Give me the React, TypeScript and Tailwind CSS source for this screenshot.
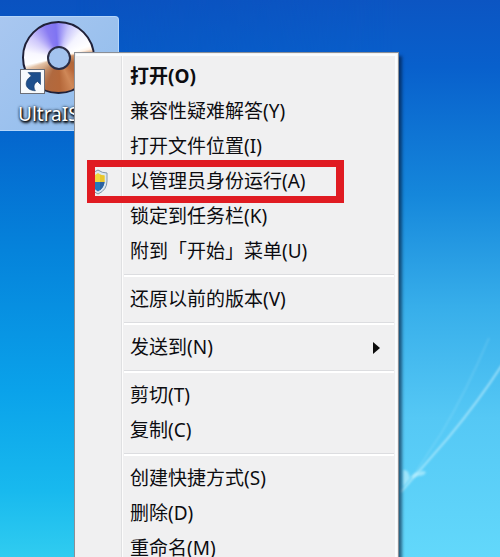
import React from 'react'

type Entry = {
    label: string
    bold?: boolean
    shield?: boolean
    marked?: boolean
    submenu?: boolean
}

const groups: Entry[][] = [
    [
        { label: '打开(O)', bold: true },
        { label: '兼容性疑难解答(Y)' },
        { label: '打开文件位置(I)' },
        { label: '以管理员身份运行(A)', shield: true, marked: true },
        { label: '锁定到任务栏(K)' },
        { label: '附到「开始」菜单(U)' },
    ],
    [{ label: '还原以前的版本(V)' }],
    [{ label: '发送到(N)', submenu: true }],
    [{ label: '剪切(T)' }, { label: '复制(C)' }],
    [{ label: '创建快捷方式(S)' }, { label: '删除(D)' }, { label: '重命名(M)' }],
]

const Wallpaper = () => {
    return (
        <svg
            className="absolute inset-0 w-full h-full"
            viewBox="0 0 500 557"
            preserveAspectRatio="xMidYMin slice"
            aria-hidden="true"
        >
            <defs>
                <linearGradient id="sky" x1="0" y1="0" x2="0" y2="1">
                    <stop offset="0" stopColor="#0a52c0" />
                    <stop offset="0.2" stopColor="#0461cb" />
                    <stop offset="0.45" stopColor="#0583db" />
                    <stop offset="0.7" stopColor="#0aa2ea" />
                    <stop offset="0.88" stopColor="#18b9ee" />
                    <stop offset="1" stopColor="#30ccf0" />
                </linearGradient>
                <linearGradient id="skyRight" x1="0" y1="0" x2="0" y2="1">
                    <stop offset="0" stopColor="#0c55c2" />
                    <stop offset="0.12" stopColor="#0860cc" />
                    <stop offset="0.35" stopColor="#1587db" />
                    <stop offset="0.55" stopColor="#37aeea" />
                    <stop offset="0.75" stopColor="#55c8f5" />
                    <stop offset="1" stopColor="#62d8fb" />
                </linearGradient>
                <linearGradient id="fade" x1="0" y1="0" x2="1" y2="0">
                    <stop offset="0.15" stopColor="#fff" stopOpacity="0" />
                    <stop offset="0.8" stopColor="#fff" stopOpacity="1" />
                </linearGradient>
                <mask id="rightSide">
                    <rect width="500" height="557" fill="url(#fade)" />
                </mask>
                <filter id="soft" x="-50%" y="-50%" width="200%" height="200%">
                    <feGaussianBlur stdDeviation="0.8" />
                </filter>
            </defs>
            <rect width="500" height="557" fill="url(#sky)" />
            <rect width="500" height="557" fill="url(#skyRight)" mask="url(#rightSide)" />
            <g fill="none" stroke="#d8f8ff" filter="url(#soft)">
                <path d="M502 365Q478 402 448 438L401 492" strokeWidth="1.6" opacity="0.65" />
                <path d="M489 338Q466 392 442 432L412 478" strokeWidth="1.2" opacity="0.22" />
            </g>
            <g fill="#c8f4ff" opacity="0.6" filter="url(#soft)">
                <path d="M403 470q6-1 7 9l-7 8z" />
                <path d="M410 478q4-6 9-6 4-2 7 0-1 4-8 4-4 2-8 2z" />
            </g>
        </svg>
    )
}

const DesktopIcon = () => {
    return (
        <a
            href="#ultraiso"
            className="relative mt-4 flex w-[119px] flex-col rounded-r-sm border border-l-0 border-[#b5d6fa] bg-linear-to-br from-[#a9c7f0] to-[#8fbcec] pt-1"
        >
            <span className="relative ml-[22px] flex size-[73px] items-center justify-center rounded-full border-2 border-[#1f2038] bg-[conic-gradient(from_257deg,#ffffff_0deg,#f8f7ff_22deg,#cfc8fb_50deg,#8a7cf2_80deg,#7f74f2_98deg,#c9c6fb_122deg,#f4f4ff_145deg,#ffffff_172deg,#fff4ea_178deg,#cf9468_186deg,#b0683c_212deg,#b8683a_235deg,#cf8858_258deg,#b5683a_280deg,#b0693f_305deg,#c4936f_330deg,#e4c4a8_352deg,#ffffff_360deg)]">
                <span className="size-6 rounded-full border-2 border-[#2b2d45] bg-[#a3c3ee]" />
                <svg className="absolute -bottom-[2px] -left-[4px] size-[25px]" viewBox="0 0 25 25" aria-hidden="true">
                    <rect x="0.5" y="0.5" width="24" height="24" fill="#f7fafc" stroke="#6c6f78" />
                    <path
                        d="M8 3.500L20.500 3.500 20.500 15.500 17.400 12.400C14 14.600 13 18 15.400 21.800 9.500 21.600 5.600 18.400 6.200 14 6.600 10.800 8.800 8.600 11.400 7z"
                        fill="#1d4f8c"
                        stroke="#123866"
                        strokeWidth="0.6"
                    />
                </svg>
            </span>
            <span className="pt-1 pl-[18px] text-[19px] leading-8 text-white [text-shadow:1px_1px_2px_#000,1px_2px_3px_#000,0_0_3px_#123]">
                UltraISO
            </span>
        </a>
    )
}

const Shield = () => {
    return (
        <svg className="h-[26px] w-5" viewBox="0 0 20 26" aria-hidden="true">
            <path d="M10 1Q14 4 19 4V12Q19 21 10 25 1 21 1 12V4Q6 4 10 1z" fill="#dbe7f0" stroke="#8295a8" />
            <path d="M4 6.500Q8 6 10 4 12 6 16.500 6.500V13H4z" fill="#f0d83c" />
            <path d="M4 13H16.500Q16 19 10 22.500 5 20 4 13z" fill="#2478bd" />
            <path d="M12 5.500Q14 6.500 16.500 6.500V13H12z" fill="#e9c62c" />
            <path d="M12 13V21.200Q16 18 16.500 13z" fill="#2c62a0" />
        </svg>
    )
}

const MenuItem = ({ label, bold, shield, marked, submenu }: Entry) => {
    return (
        <button type="button" role="menuitem" className="relative flex h-[35px] w-full items-center text-left">
            <span className="flex w-[54px] shrink-0 pl-3">{shield && <Shield />}</span>
            <span className={bold ? 'font-bold' : ''}>{label}</span>
            {submenu && (
                <svg className="mr-[15px] ml-auto h-3 w-[7px]" viewBox="0 0 7 12" aria-hidden="true">
                    <path d="M0 0L7 6 0 12z" fill="#0c0c0c" />
                </svg>
            )}
            {marked && (
                <span className="absolute -inset-y-1 right-[51px] left-[11px] border-x-8 border-y-[7px] border-[#e01b22]" />
            )}
        </button>
    )
}

const ContextMenu = () => {
    return (
        <div
            role="menu"
            className="absolute top-[52px] left-[74px] w-[325px] border border-[#8b8f96] bg-[#f0f0f1] p-px shadow-[3px_4px_3px_rgba(0,20,50,0.6)]"
        >
            <div className="border-r-2 border-t-2 border-[#fbfdfe] bg-[linear-gradient(to_right,transparent_45px,#dfe0e2_45px,#dfe0e2_46px,#fcfcfc_46px,#fcfcfc_47px,transparent_47px)] pt-[3px] pb-1">
                {groups.map((group, i) => (
                    <React.Fragment key={i}>
                        {i > 0 && (
                            <div role="separator" className="flex h-[13px] items-center pr-px pl-12">
                                <span className="h-[3px] w-full border-t border-[#dcdde0] bg-white" />
                            </div>
                        )}
                        {group.map((entry) => (
                            <MenuItem key={entry.label} {...entry} />
                        ))}
                    </React.Fragment>
                ))}
            </div>
        </div>
    )
}

const App = () => {
    return (
        <main className="relative h-screen overflow-hidden bg-[#0a52c0] text-[19px] text-[#0c0c10] [font-family:'Noto_Sans','Noto_Sans_CJK_SC',sans-serif]">
            <Wallpaper />
            <div className="flex">
                <DesktopIcon />
            </div>
            <ContextMenu />
        </main>
    )
}

export default App
